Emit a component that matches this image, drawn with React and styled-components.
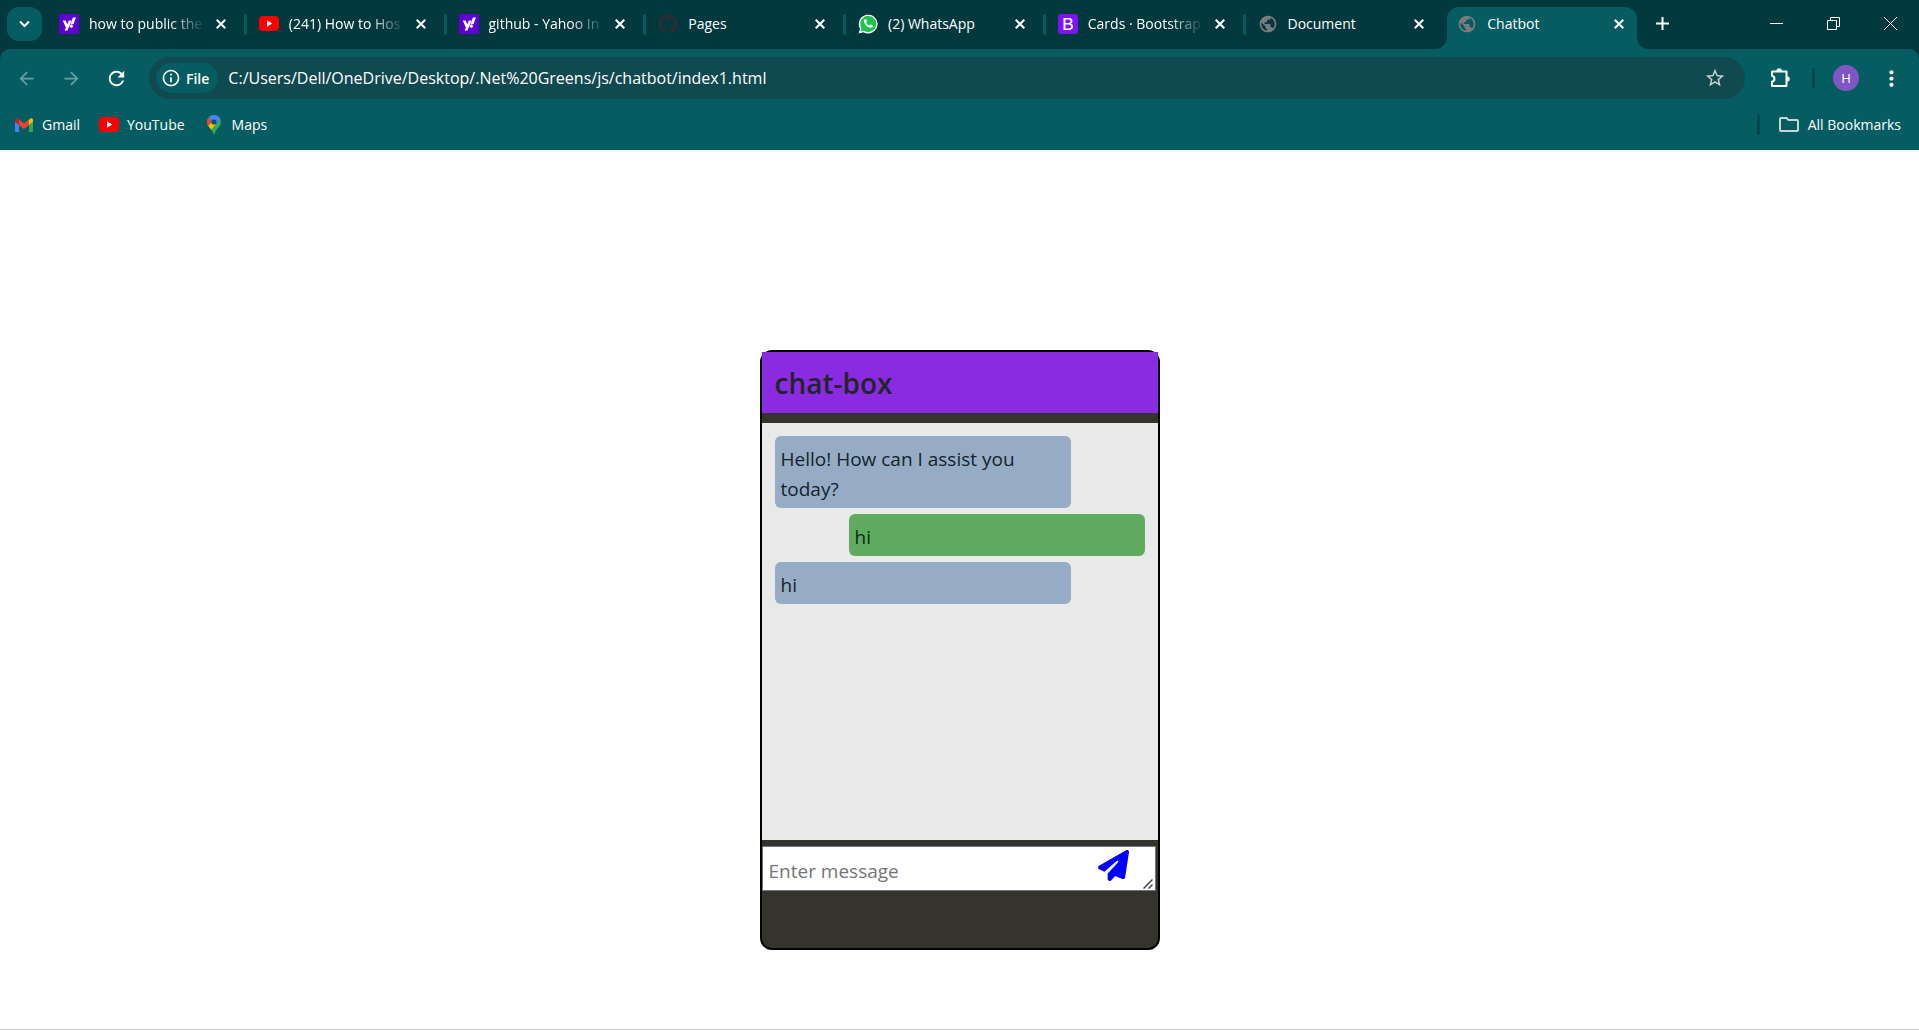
import React, { useState } from "react";
import styled, { createGlobalStyle, css } from "styled-components";
import { FaPaperPlane, FaGithub } from "react-icons/fa6";
import { MdPublic, MdArrowBack, MdArrowForward, MdRefresh, MdStarBorder, MdMoreVert, MdInfoOutline } from "react-icons/md";

const font = `"Segoe UI", "Open Sans", "Noto Sans", sans-serif`;

const GlobalStyle = createGlobalStyle`
  *, *::before, *::after { box-sizing: border-box; }
  body { margin: 0; background: #fff; font-family: ${font}; color: #212529; }
  button, input, textarea { font-family: inherit; }
  button { border: 0; padding: 0; background: none; color: inherit; cursor: pointer; }
  svg { display: block; flex: none; }
`;

const Window = styled.div`
  min-height: 100vh;
  display: flex;
  flex-direction: column;
`;

const Chrome = styled.header`
  background: #02393e;
  color: #fff;
`;

const TabStrip = styled.nav`
  display: flex;
  height: 49px;
  padding-left: 7px;
`;

const TabSearch = styled.button`
  width: 35px;
  height: 34px;
  margin: 7px 3px 0 0;
  flex: none;
  border-radius: 12px;
  background: #055c61;
  display: grid;
  place-items: center;
`;

const Tabs = styled.div`
  display: flex;
  flex: 0 1 1598px;
  min-width: 0;
`;

const Tab = styled.div`
  flex: 1 1 0;
  min-width: 0;
  display: flex;
  align-items: center;
  gap: 10px;
  padding: 0 16px 2px 14px;
  position: relative;
  ${(p) => p.$divided && css`
    &::after {
      content: "";
      position: absolute;
      right: -2px;
      top: 14px;
      width: 3px;
      height: 21px;
      border-radius: 2px;
      background: #055c61;
    }
  `}
  ${(p) => p.$active && css`
    &::before {
      content: "";
      position: absolute;
      z-index: 0;
      inset: 7px 6px 0 4px;
      border-radius: 12px 12px 0 0;
      background: #055c61;
    }
    & > * { position: relative; }
  `}
`;

const Flare = styled.svg`
  && { position: absolute; }
  bottom: 0;
  fill: #055c61;
  ${(p) => (p.$right ? "right: -6px; transform: scaleX(-1);" : "left: -8px;")}
`;

const TabTitle = styled.a`
  flex: 1;
  min-width: 0;
  overflow: hidden;
  white-space: nowrap;
  font-size: 14px;
  line-height: 24px;
  color: #fff;
  text-decoration: none;
  ${(p) => p.$fade && css`
    mask-image: linear-gradient(to right, #000 80px, transparent 116px);
  `}
`;

const TabClose = styled.button`
  flex: none;
  width: 16px;
  height: 20px;
  display: grid;
  place-items: center;
`;

const NewTab = styled.button`
  width: 38px;
  height: 47px;
  flex: none;
  display: grid;
  place-items: center;
`;

const WindowControls = styled.div`
  margin-left: auto;
  display: flex;
`;

const WindowButton = styled.button`
  width: 57px;
  height: 47px;
  display: grid;
  place-items: center;
`;

const Panel = styled.div`
  background: #055c61;
  border-radius: 10px 10px 0 0;
  height: 101px;
`;

const Toolbar = styled.div`
  display: flex;
  align-items: center;
  padding: 8px 10px 0 4px;
`;

const ToolButton = styled.button`
  width: ${(p) => p.$width || 45}px;
  height: 42px;
  flex: none;
  display: grid;
  place-items: center;
  color: ${(p) => (p.$dim ? "#66a0a4" : "#fff")};
`;

const AddressBar = styled.form`
  flex: 1;
  min-width: 0;
  height: 42px;
  margin: 0 12px 0 10px;
  padding: 0 19px 0 7px;
  border-radius: 21px;
  background: #10494f;
  display: flex;
  align-items: center;
`;

const FileChip = styled.button`
  height: 30px;
  padding: 0 9px 0 5px;
  border-radius: 15px;
  background: #055c61;
  display: flex;
  align-items: center;
  gap: 5px;
  font-size: 14px;
  font-weight: 600;
`;

const AddressInput = styled.input`
  flex: 1;
  min-width: 0;
  margin-left: 10px;
  padding: 0;
  border: 0;
  outline: 0;
  background: none;
  color: #fff;
  font-size: 16px;
  line-height: 24px;
`;

const Divider = styled.span`
  width: 3px;
  height: 20px;
  margin-left: 10px;
  border-radius: 2px;
  flex: none;
  background: #02454a;
`;

const Avatar = styled.button`
  width: 26px;
  height: 26px;
  margin: 0 14px 0 18px;
  flex: none;
  border-radius: 50%;
  background: #7e57c2;
  font-size: 13px;
`;

const Bookmarks = styled.nav`
  display: flex;
  align-items: center;
  gap: 19px;
  padding: 5px 18px 0 14px;
  height: 46px;
`;

const Bookmark = styled.a`
  display: flex;
  align-items: center;
  gap: 8px;
  color: #fff;
  font-size: 14px;
  line-height: 24px;
  text-decoration: none;
`;

const BookmarksEnd = styled.div`
  margin-left: auto;
  display: flex;
  align-items: center;
  gap: 19px;
`;

const Page = styled.main`
  flex: 1;
  padding-top: 200px;
  border-bottom: 1px solid #cfcfcf;
`;

const ChatBox = styled.section`
  width: 400px;
  height: 600px;
  margin: 0 auto;
  border: 2px solid #000;
  border-radius: 12px;
  background: #34332d;
  display: flex;
  flex-direction: column;
`;

const ChatHeader = styled.h1`
  margin: 0 0 10px;
  padding: 14px 13px 12px;
  background: #8a2be2;
  color: #212529;
  font-size: 28px;
  font-weight: 600;
  line-height: 35px;
`;

const Messages = styled.div`
  height: 417px;
  padding: 13px;
  background: #e9e9e9;
  display: flex;
  flex-direction: column;
  gap: 6px;
`;

const Message = styled.p`
  width: 80%;
  margin: 0;
  padding: 8px 6px 4px;
  border-radius: 6px;
  font-size: 19px;
  line-height: 30px;
  align-self: ${(p) => (p.$own ? "flex-end" : "flex-start")};
  background: ${(p) => (p.$own ? "#5fab5f" : "#95acc4")};
  color: ${(p) => (p.$own ? "#0b2c12" : "#14232e")};
`;

const Composer = styled.form`
  position: relative;
  margin: 6px 2px 0 0;
`;

const MessageInput = styled.textarea`
  display: block;
  width: 100%;
  height: 45px;
  padding: 9px 60px 5px 6px;
  border: 1px solid #767676;
  outline: 0;
  resize: none;
  overflow: hidden;
  background: #fff;
  font-size: 19px;
  line-height: 30px;
  &::placeholder { color: #757575; opacity: 1; }
`;

const SendButton = styled.button`
  position: absolute;
  right: 27px;
  top: 4px;
  color: #00f;
`;

const Grip = styled.svg`
  position: absolute;
  right: 3px;
  bottom: 2px;
  pointer-events: none;
`;

const YahooIcon = () => (
  <svg width="20" height="20" viewBox="0 0 21 20" preserveAspectRatio="none">
    <rect width="21" height="20" fill="#6001d2" />
    <path d="M4 6.5h3l1.7 4 1.6-4h2.9L8.9 16.5H6l1.2-2.9z" fill="#fff" />
    <path d="M14.6 3.6h3.2l-2.7 6.6h-3z" fill="#fff" />
    <circle cx="12.9" cy="12.2" r="1.6" fill="#fff" />
  </svg>
);

const YouTubeIcon = () => (
  <svg width="20" height="15" viewBox="0 0 20 15">
    <rect width="20" height="15" rx="4" fill="#f00" />
    <path d="M8 4.3v6.4l5.2-3.2z" fill="#fff" />
  </svg>
);

const WhatsAppIcon = () => (
  <svg width="20" height="20" viewBox="0 0 20 20">
    <path d="M.6 19.6 2 14.7a9.4 9.4 0 1 1 3.5 3.5z" fill="#fff" />
    <path d="m2.5 17.6 1-3.4a8 8 0 1 1 2.5 2.5z" fill="#1fc34e" />
    <path d="M7.2 5.2c-.9.3-1.4 1.2-1.2 2.3.5 3.1 3.8 6 6.7 6.3 1.2.1 2.3-.7 2.4-2 0-.3-2-1.3-2.3-1.3-.5 0-.9 1.2-1.3 1.1-1.5-.6-2.5-1.6-3.2-2.9-.2-.4.7-.8.7-1.3 0-.4-.7-1.9-1-2.2z" fill="#fff" />
  </svg>
);

const BootstrapIcon = () => (
  <svg width="20" height="20" viewBox="0 0 20 20">
    <rect width="20" height="20" rx="3" fill="#7e13f8" />
    <path fillRule="evenodd" d="M5.5 4h5.300c2.300 0 3.700 1.100 3.700 2.900 0 1.300-.9 2.300-2 2.600 1.500.2 2.600 1.400 2.600 3 0 2.200-1.600 3.500-4.300 3.500H5.500zm2 1.600v3.400h2.500c1.600 0 2.500-.6 2.500-1.700 0-1.100-.8-1.700-2.200-1.700zm0 5v3.800h3c1.700 0 2.600-.7 2.600-1.900s-1-1.900-2.800-1.900z" fill="#fff" />
  </svg>
);

const GmailIcon = () => (
  <svg width="20" height="14" viewBox="-1 0 20 14">
    <path d="M0 2.3V12.7C0 13.4.6 14 1.3 14H4V6.5L0 3.5z" fill="#4285f4" />
    <path d="M14 6.5V14h2.7c.7 0 1.3-.6 1.3-1.3V3.5z" fill="#34a853" />
    <path d="M4 1.6v5.6l5 3.7 5-3.7V1.6L9 5.3z" fill="#ea4335" />
    <path d="M0 2v1.7l4 3V1.6L3.2.9C1.9 0 0 .6 0 2z" fill="#c5221f" />
    <path d="M14 1.6v5.1l4-3V2c0-1.5-1.9-2.2-3.2-1.1z" fill="#fbbc04" />
  </svg>
);

const MapsIcon = () => (
  <svg width="20" height="19" viewBox="-3 0 20 19">
    <path d="M7 0a7 7 0 0 1 7 7c0 4.7-5 6.5-6.2 11.4-.2.8-1.4.8-1.6 0C5.1 13.5 0 11.7 0 7a7 7 0 0 1 7-7z" fill="#34a853" />
    <path d="M1.2 10.700c.9 1.500 2 2.700 3 4L11.500 6 8.800 3.600z" fill="#fbbc04" />
    <path d="M0 7c0-1.800.6-3.300 1.700-4.500l3.600 3L1.200 10.700A7 7 0 0 1 0 7z" fill="#ea4335" />
    <path d="M1.700 2.500A7 7 0 0 1 13.500 4.400L8.800 9.800 5.300 5.500z" fill="#4285f4" />
    <circle cx="7" cy="7" r="2.6" fill="#0f4d7c" />
  </svg>
);

const PuzzleIcon = () => (
  <svg width="22" height="22" viewBox="0 0 22 22">
    <path d="M3 4.500h14.500v14.500H3v-4.300a3 3 0 0 0 0-5.900z" fill="none" stroke="#fff" strokeWidth="2" strokeLinejoin="round" />
    <path d="M7.500 4a2.700 2.700 0 0 1 5.400 0zM18 9.200a2.700 2.700 0 0 1 0 5.400z" fill="#fff" />
  </svg>
);

const FolderIcon = () => (
  <svg width="21" height="15" viewBox="0 0 21 15" fill="none" stroke="#c9d6d8" strokeWidth="2">
    <path d="M1 2a1 1 0 0 1 1-1h5.500l2 2H18a1 1 0 0 1 1 1v9a1 1 0 0 1-1 1H2a1 1 0 0 1-1-1z" />
  </svg>
);

const CloseIcon = () => (
  <svg width="10" height="10" viewBox="0 0 10 10" stroke="#fff" strokeWidth="2"><path d="m.7.7 8.600 8.600m0-8.600L.7 9.300" /></svg>
);

const tabs = [
  { title: "how to public the", icon: <YahooIcon />, fade: true },
  { title: "(241) How to Hos", icon: <YouTubeIcon />, fade: true },
  { title: "github - Yahoo In", icon: <YahooIcon />, fade: true },
  { title: "Pages", icon: <FaGithub size={20} color="#2c2d33" /> },
  { title: "(2) WhatsApp", icon: <WhatsAppIcon /> },
  { title: "Cards · Bootstrap", icon: <BootstrapIcon />, fade: true },
  { title: "Document", icon: <MdPublic size={20} color="#7c7b7e" /> },
  { title: "Chatbot", icon: <MdPublic size={20} color="#7c7b7e" />, active: true },
];

const initialMessages = [
  { text: "Hello! How can I assist you today?" },
  { text: "hi", own: true },
  { text: "hi" },
];

export default function App() {
  const [messages, setMessages] = useState(initialMessages);
  const [draft, setDraft] = useState("");

  const send = (event) => {
    event.preventDefault();
    if (!draft.trim()) return;
    setMessages([...messages, { text: draft, own: true }]);
    setDraft("");
  };

  return (
    <Window>
      <GlobalStyle />
      <Chrome>
        <TabStrip aria-label="Tabs">
          <TabSearch aria-label="Search tabs">
            <svg width="11" height="8" viewBox="0 0 11 8" fill="none" stroke="#fff" strokeWidth="2"><path d="m1 1.500 4.500 4.500L10 1.500" /></svg>
          </TabSearch>
          <Tabs>
            {tabs.map((tab, i) => (
              <Tab key={tab.title} $active={tab.active} $divided={i < tabs.length - 2}>
                {tab.active && <Flare width="12" height="12"><path d="M12 0v12H0A12 12 0 0 0 12 0z" /></Flare>}
                {tab.active && <Flare $right width="12" height="12"><path d="M12 0v12H0A12 12 0 0 0 12 0z" /></Flare>}
                {tab.icon}
                <TabTitle href="#" $fade={tab.fade}>{tab.title}</TabTitle>
                <TabClose aria-label={`Close ${tab.title}`}><CloseIcon /></TabClose>
              </Tab>
            ))}
          </Tabs>
          <NewTab aria-label="New tab">
            <svg width="13" height="13" viewBox="0 0 13 13" stroke="#fff" strokeWidth="2"><path d="M6.500 0v13M0 6.500h13" /></svg>
          </NewTab>
          <WindowControls>
            <WindowButton aria-label="Minimize">
              <svg width="13" height="13" stroke="#fff"><path d="M0 6.500h13" /></svg>
            </WindowButton>
            <WindowButton aria-label="Restore">
              <svg width="13" height="13" fill="none" stroke="#fff"><path d="M.5 3.500h9v9h-9zM3.500 3V.5h9v9H10" /></svg>
            </WindowButton>
            <WindowButton aria-label="Close">
              <svg width="13" height="13" stroke="#fff"><path d="m0 0 13 13M13 0 0 13" /></svg>
            </WindowButton>
          </WindowControls>
        </TabStrip>
        <Panel>
          <Toolbar>
            <ToolButton $dim aria-label="Back"><MdArrowBack size={21} /></ToolButton>
            <ToolButton $dim aria-label="Forward"><MdArrowForward size={21} /></ToolButton>
            <ToolButton aria-label="Reload"><MdRefresh size={23} /></ToolButton>
            <AddressBar onSubmit={(e) => e.preventDefault()}>
              <FileChip type="button"><MdInfoOutline size={20} />File</FileChip>
              <AddressInput aria-label="Address" defaultValue="C:/Users/Dell/OneDrive/Desktop/.Net%20Greens/js/chatbot/index1.html" />
              <MdStarBorder size={22} color="#c9d6d8" />
            </AddressBar>
            <ToolButton aria-label="Extensions"><PuzzleIcon /></ToolButton>
            <Divider />
            <Avatar aria-label="Profile H">H</Avatar>
            <ToolButton $width={36} aria-label="Menu"><MdMoreVert size={25} /></ToolButton>
          </Toolbar>
          <Bookmarks aria-label="Bookmarks">
            <Bookmark href="#"><GmailIcon />Gmail</Bookmark>
            <Bookmark href="#"><YouTubeIcon />YouTube</Bookmark>
            <Bookmark href="#"><MapsIcon />Maps</Bookmark>
            <BookmarksEnd>
              <Divider />
              <Bookmark href="#"><FolderIcon />All Bookmarks</Bookmark>
            </BookmarksEnd>
          </Bookmarks>
        </Panel>
      </Chrome>
      <Page>
        <ChatBox>
          <ChatHeader>chat-box</ChatHeader>
          <Messages>
            {messages.map((m, i) => <Message key={i} $own={m.own}>{m.text}</Message>)}
          </Messages>
          <Composer onSubmit={send}>
            <MessageInput aria-label="Message" placeholder="Enter message" value={draft} onChange={(e) => setDraft(e.target.value)} />
            <SendButton aria-label="Send"><FaPaperPlane size={31} /></SendButton>
            <Grip width="10" height="10" stroke="#444" strokeWidth="1.500"><path d="M.5 9.500l9-9M5.500 9.500l4-4" /></Grip>
          </Composer>
        </ChatBox>
      </Page>
    </Window>
  );
}
